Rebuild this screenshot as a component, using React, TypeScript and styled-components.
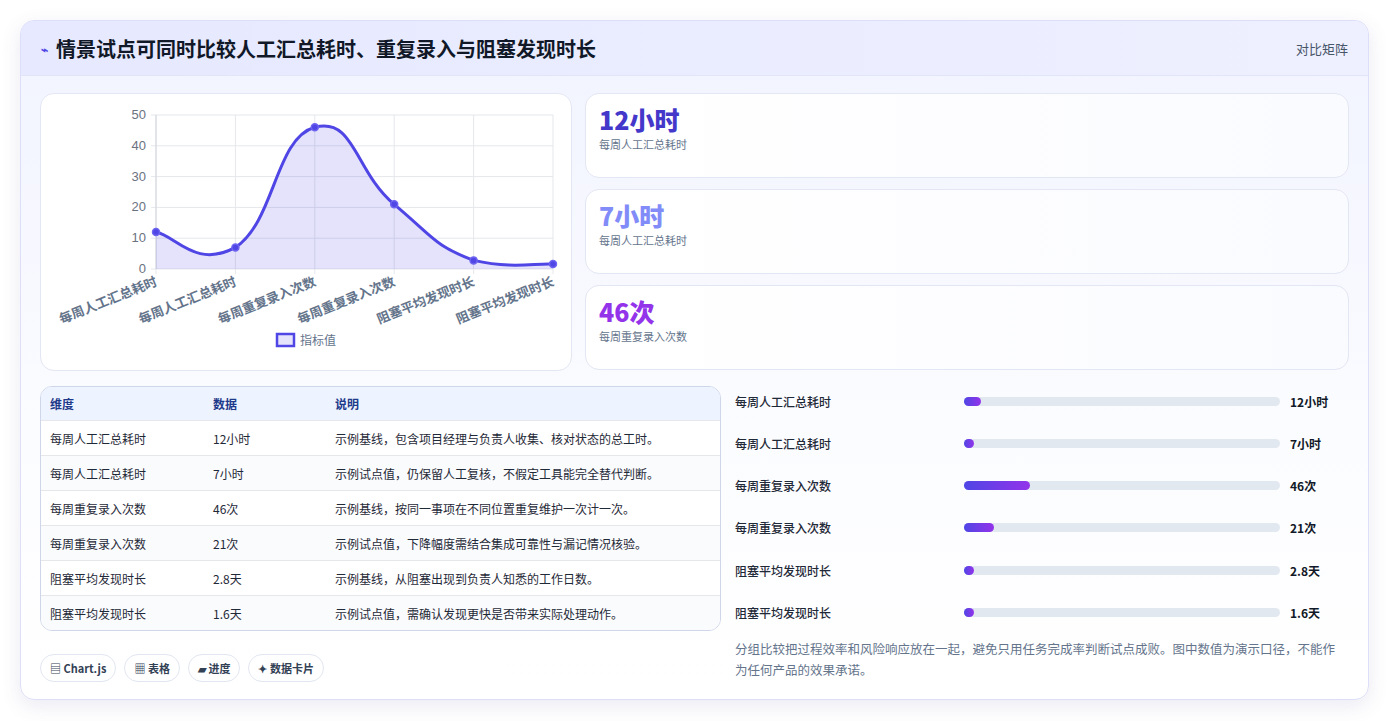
import React from "react";
import styled, { createGlobalStyle } from "styled-components";

const G = createGlobalStyle`
  body { margin:0; background:#fff; font-family: "Noto Sans CJK SC", "Noto Sans", sans-serif; }
`;
const Page = styled.div`padding:20px 21px 21px 20px; height:721px; box-sizing:border-box;`;
const Card = styled.div`
  height:680px; box-sizing:border-box; border:1px solid #dcdff7; border-radius:14px; overflow:hidden;
  background:linear-gradient(180deg,#f1f3ff 0%,#fbfcff 60%,#ffffff 100%);
  box-shadow:0 6px 20px rgba(80,80,160,0.12);
`;
const Header = styled.div`
  height:55px; box-sizing:border-box; display:flex; align-items:center; justify-content:space-between; padding:0 20px;
  background:linear-gradient(90deg,#e6e9ff,#eef0ff); border-bottom:1px solid #e2e5f7;
`;
const Title = styled.h1`margin:0; font-size:20px; font-weight:700; color:#111827; display:flex; align-items:center; gap:8px;`;
const Icon = styled.span`color:#4f46e5; font-size:12px;`;
const HeaderTag = styled.span`font-size:13px; color:#475569;`;
const Body = styled.div`padding:17px 19px 0 19px; display:flex; flex-direction:column; gap:15px;`;
const TopRow = styled.div`display:grid; grid-template-columns:532px 1fr; gap:13px;`;
const Panel = styled.div`background:#fff; border:1px solid #e3e6f3; border-radius:14px; box-sizing:border-box;`;
const ChartPanel = styled(Panel)`height:278px; position:relative; overflow:hidden;`;
const Stats = styled.div`display:flex; flex-direction:column; gap:11px;`;
const Stat = styled(Panel)`height:85px; padding:9px 13px; background:linear-gradient(90deg,#fff,#fafbff);`;
const StatVal = styled.div<{ c: string }>`font-size:25px; font-weight:800; color:${p => p.c}; line-height:32px;`;
const StatLbl = styled.div`font-size:11px; color:#64748b; margin-top:1px;`;
const BottomRow = styled.div`display:grid; grid-template-columns:681px 1fr; gap:14px;`;
const Table = styled.div`border:1px solid #cfd6ea; border-radius:12px; overflow:hidden; background:#fff;`;
const TRow = styled.div<{ head?: boolean }>`
  display:grid; grid-template-columns:163px 122px 1fr; align-items:center; padding:0 9px; box-sizing:border-box;
  height:${p => p.head ? 33 : 35}px; font-size:12px;
  color:${p => p.head ? "#1e3a8a" : "#1f2937"}; font-weight:${p => p.head ? 600 : 400};
  background:${p => p.head ? "#eef4ff" : "#fff"};
  border-top:${p => p.head ? "none" : "1px solid #e5e7eb"};
  &:nth-child(odd){ background:${p => p.head ? "#eef4ff" : "#fafbfd"}; }
`;
const Chips = styled.div`display:flex; gap:8px; margin-top:23px;`;
const Chip = styled.span`border:1px solid #e2e6f0; border-radius:14px; padding:5px 9px; font-size:11px; font-weight:600; color:#334155; background:#fff;`;
const Bars = styled.div`display:flex; flex-direction:column; gap:12.3px;`;
const BarRow = styled.div`display:grid; grid-template-columns:229px 316px 1fr; align-items:center; height:30px; font-size:12px; font-weight:500; color:#1f2937;`;
const Track = styled.div`height:9px; background:#e2e8f0; border-radius:5px; position:relative;`;
const Fill = styled.div`height:9px; border-radius:5px; background:linear-gradient(90deg,#4f46e5,#9333ea); min-width:10px;`;
const BarVal = styled.span`padding-left:10px; font-weight:700; color:#111827;`;
const Note = styled.p`margin:11px 0 0; font-size:12.5px; line-height:21px; color:#64748b; padding-right:5px;`;

const data = [12, 7, 46, 21, 2.8, 1.6];
const labels = ["每周人工汇总耗时", "每周人工汇总耗时", "每周重复录入次数", "每周重复录入次数", "阻塞平均发现时长", "阻塞平均发现时长"];
const x0 = 115, x1 = 512, yT = 21, yB = 175;
const px = (i: number) => x0 + (i * (x1 - x0)) / 5;
const py = (v: number) => yB - (v / 50) * (yB - yT);

function Chart() {
  const pts = data.map((v, i) => [px(i), py(v)]);
  let d = `M${pts[0][0]},${pts[0][1]}`;
  for (let i = 0; i < pts.length - 1; i++) {
    const p0 = pts[i - 1] || pts[i], p1 = pts[i], p2 = pts[i + 1], p3 = pts[i + 2] || p2;
    const t = 0.25;
    const c1 = [p1[0] + (p2[0] - p0[0]) * t, p1[1] + (p2[1] - p0[1]) * t];
    const c2 = [p2[0] - (p3[0] - p1[0]) * t, p2[1] - (p3[1] - p1[1]) * t];
    d += ` C${c1[0]},${Math.min(c1[1], yB)} ${c2[0]},${Math.min(c2[1], yB)} ${p2[0]},${p2[1]}`;
  }
  return (
    <svg width="531" height="277" style={{ display: "block" }}>
      {[0, 10, 20, 30, 40, 50].map(v => (
        <g key={v}>
          <line x1={x0 - 5} x2={x1} y1={py(v)} y2={py(v)} stroke="#e5e7eb" />
          <text x={x0 - 10} y={py(v) + 4} fontSize="13" fill="#6b7280" textAnchor="end" fontFamily="Liberation Sans">{v}</text>
        </g>
      ))}
      {data.map((_, i) => <line key={i} x1={px(i)} x2={px(i)} y1={yT} y2={yB + 5} stroke="#e5e7eb" />)}
      <line x1={x0} x2={x0} y1={yT} y2={yB} stroke="#d1d5db" />
      <path d={`${d} L${x1},${yB} L${x0},${yB} Z`} fill="rgba(79,70,229,0.15)" />
      <path d={d} fill="none" stroke="#4f46e5" strokeWidth="3" />
      {pts.map(([x, y], i) => <circle key={i} cx={x} cy={y} r="3.5" fill="#4f46e5" stroke="#6d64f0" strokeWidth="1.5" />)}
      {labels.map((l, i) => (
        <text key={i} x={px(i) + 2} y={yB + 16} fontSize="13" fontWeight="600" fill="#64748b" textAnchor="end" transform={`rotate(-22 ${px(i) + 2} ${yB + 16})`}>{l}</text>
      ))}
      <rect x="236" y="240" width="17" height="12" fill="rgba(79,70,229,0.15)" stroke="#4f46e5" strokeWidth="2.5" />
      <text x="259" y="251" fontSize="12" fill="#64748b">指标值</text>
    </svg>
  );
}

const rows = [
  ["每周人工汇总耗时", "12小时", "示例基线，包含项目经理与负责人收集、核对状态的总工时。", 12],
  ["每周人工汇总耗时", "7小时", "示例试点值，仍保留人工复核，不假定工具能完全替代判断。", 7],
  ["每周重复录入次数", "46次", "示例基线，按同一事项在不同位置重复维护一次计一次。", 46],
  ["每周重复录入次数", "21次", "示例试点值，下降幅度需结合集成可靠性与漏记情况核验。", 21],
  ["阻塞平均发现时长", "2.8天", "示例基线，从阻塞出现到负责人知悉的工作日数。", 2.8],
  ["阻塞平均发现时长", "1.6天", "示例试点值，需确认发现更快是否带来实际处理动作。", 1.6],
] as const;

export default function App() {
  return (
    <Page>
      <G />
      <Card>
        <Header>
          <Title><Icon>⌁</Icon>情景试点可同时比较人工汇总耗时、重复录入与阻塞发现时长</Title>
          <HeaderTag>对比矩阵</HeaderTag>
        </Header>
        <Body>
          <TopRow>
            <ChartPanel><Chart /></ChartPanel>
            <Stats>
              <Stat><StatVal c="#4338ca">12小时</StatVal><StatLbl>每周人工汇总耗时</StatLbl></Stat>
              <Stat><StatVal c="#818cf8">7小时</StatVal><StatLbl>每周人工汇总耗时</StatLbl></Stat>
              <Stat><StatVal c="#9333ea">46次</StatVal><StatLbl>每周重复录入次数</StatLbl></Stat>
            </Stats>
          </TopRow>
          <BottomRow>
            <div>
              <Table>
                <TRow head><span>维度</span><span>数据</span><span>说明</span></TRow>
                {rows.map((r, i) => <TRow key={i}><span>{r[0]}</span><span>{r[1]}</span><span>{r[2]}</span></TRow>)}
              </Table>
              <Chips>
                <Chip>▤ Chart.js</Chip><Chip>▦ 表格</Chip><Chip>▰ 进度</Chip><Chip>✦ 数据卡片</Chip>
              </Chips>
            </div>
            <div>
              <Bars>
                {rows.map((r, i) => (
                  <BarRow key={i}>
                    <span>{r[0]}</span>
                    <Track><Fill style={{ width: `${(Number(r[3]) / 220) * 100}%` }} /></Track>
                    <BarVal>{r[1]}</BarVal>
                  </BarRow>
                ))}
              </Bars>
              <Note>分组比较把过程效率和风险响应放在一起，避免只用任务完成率判断试点成败。图中数值为演示口径，不能作为任何产品的效果承诺。</Note>
            </div>
          </BottomRow>
        </Body>
      </Card>
    </Page>
  );
}
